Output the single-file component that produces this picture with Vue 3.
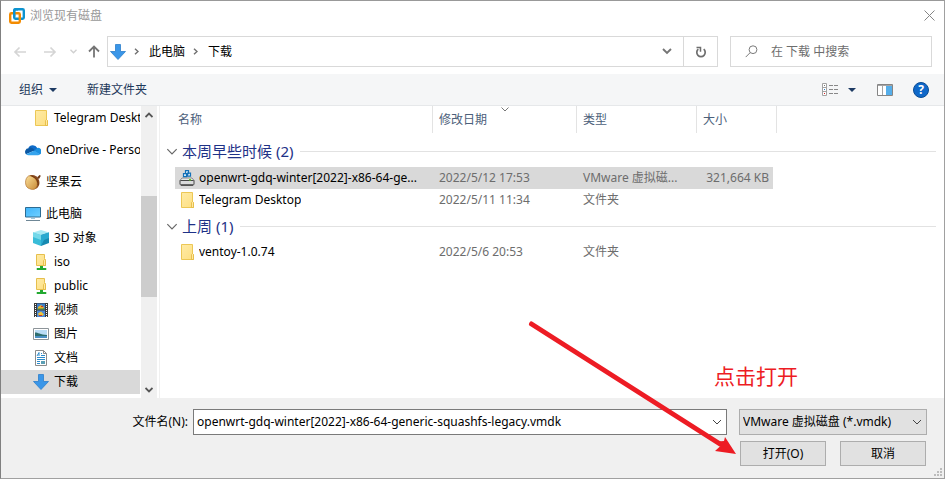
<script setup>
import { ref } from 'vue'

const places = [
  { name: 'Telegram Desktop', icon: 'folder', level: 2 },
  { name: 'OneDrive - Personal', icon: 'cloud', level: 1 },
  { name: '坚果云', icon: 'nut', level: 1 },
  { name: '此电脑', icon: 'pc', level: 1 },
  { name: '3D 对象', icon: 'cube', level: 2 },
  { name: 'iso', icon: 'netfolder', level: 2 },
  { name: 'public', icon: 'netfolder', level: 2 },
  { name: '视频', icon: 'video', level: 2 },
  { name: '图片', icon: 'picture', level: 2 },
  { name: '文档', icon: 'doc', level: 2 },
  { name: '下载', icon: 'download', level: 2 }
]

const groups = [
  {
    title: '本周早些时候 (2)',
    files: [
      { name: 'openwrt-gdq-winter[2022]-x86-64-ge...', date: '2022/5/12 17:53', type: 'VMware 虚拟磁...', size: '321,664 KB', icon: 'disk' },
      { name: 'Telegram Desktop', date: '2022/5/11 11:34', type: '文件夹', size: '', icon: 'folder' }
    ]
  },
  {
    title: '上周 (1)',
    files: [{ name: 'ventoy-1.0.74', date: '2022/5/6 20:53', type: '文件夹', size: '', icon: 'folder' }]
  }
]

const currentPlace = ref('下载')
const fileName = ref('openwrt-gdq-winter[2022]-x86-64-generic-squashfs-legacy.vmdk')
const selected = ref(groups[0].files[0].name)
const fileType = ref('vmdk')
</script>

<template>
  <div class="dialog">
    <svg class="defs" aria-hidden="true">
      <defs>
        <linearGradient id="gBlue" x1="0" y1="0" x2="1" y2="1"><stop offset="0" stop-color="#3fb4fb" /><stop offset="1" stop-color="#6fd0ff" /></linearGradient>
        <linearGradient id="gNut" x1="0" y1="0" x2="1" y2="1"><stop offset="0" stop-color="#fbe09a" /><stop offset="1" stop-color="#c98a35" /></linearGradient>
        <linearGradient id="gFolder" x1="0" y1="0" x2="1" y2="1"><stop offset="0" stop-color="#ffeba6" /><stop offset="1" stop-color="#fddf82" /></linearGradient>
      </defs>
      <symbol id="i-folder" viewBox="0 0 16 16">
        <path d="M2.500.5h11v9l1 1v5h-12z" fill="url(#gFolder)" stroke="#ecc755" />
        <path d="M12.500 15.500v-5l1-1 1 1v5z" fill="#ffe9a2" stroke="#e3b83c" stroke-width=".8" />
      </symbol>
      <symbol id="i-netfolder" viewBox="0 0 16 16">
        <path d="M3.500.5h8v4l1 1v6h-9z" fill="url(#gFolder)" stroke="#e6bf4c" />
        <path d="M10.500 11.500v-5l1-1 1 1v5z" fill="#ffe9a2" stroke="#e3b83c" stroke-width=".8" />
        <path d="M7 12h3v2h3v2H4v-2h3z" fill="#23a931" />
        <path d="M3 14.500h1v1H3zM13 14.500h1v1h-1z" fill="#8bd390" />
      </symbol>
      <symbol id="i-cloud" viewBox="0 0 16 16">
        <path d="M3.200 6.200A5 5 0 0 1 12.300 6 4 4 0 0 1 15 12.500L9 9z" fill="#0f6cc9" />
        <path d="M3.500 6.200A3.600 3.600 0 0 0 1 12.200L9.500 8.600A4 4 0 0 0 3.500 6.200z" fill="#0c59a4" />
        <path d="M9.500 8.600 12.300 6a3.400 3.400 0 0 1 2.900 6z" fill="#1a90e0" />
        <path d="M1 12.200A3.500 3.500 0 0 0 3.500 13.300h9.300a3 3 0 0 0 2.300-1.200L9.500 8.600z" fill="#35a4ee" />
      </symbol>
      <symbol id="i-nut" viewBox="0 0 16 16">
        <path d="M4.500 1.500C8 0 12.500 2 14 6c1.500 4.500-1 8.500-4.500 9.300z" fill="#8a4a1e" />
        <path d="M3.500 2C7 1 12.300 5.500 12.300 10c0 2.500-1.500 4.500-3 5.200-2.500.8-4.500-.4-6.300-1.200C-.2 12-.5 4.500 3.500 2z" fill="url(#gNut)" stroke="#b27430" stroke-width=".7" />
        <path d="M6.500 2.200c4 .8 7 4.500 6.500 9" fill="none" stroke="#71380f" />
        <path d="M12 3.800 14.500 1l1.300.8L14 5z" fill="#6b3512" />
      </symbol>
      <symbol id="i-pc" viewBox="0 0 16 16">
        <path d="M.5 1.500h15v9.500H.5z" fill="url(#gBlue)" stroke="#2d6c93" />
        <path d="M6 12h4v1H6z" fill="#9fc6dc" /><path d="M1 14h14v1H1z" fill="#6f8796" />
      </symbol>
      <symbol id="i-cube" viewBox="0 0 16 16">
        <path d="M8 0l8 2.500L8 5 0 2.500z" fill="#a8e9f3" />
        <path d="M0 2.500 8 5v11l-8-3z" fill="#39bcd8" /><path d="M16 2.500 8 5v11l8-3z" fill="#1689b0" />
        <path d="M8 5l8-2.500V8l-5 2-3 6z" fill="#29a9cf" /><path d="M0 2.500 8 5v5L0 7z" fill="#74d8e9" />
      </symbol>
      <symbol id="i-video" viewBox="0 0 16 16">
        <path d="M1 1h14v14H1z" fill="#3b3b3b" /><path d="M4 1.500h8v6H4z" fill="#3d7fc9" /><path d="M4 8.500h8V15H4z" fill="#4c8bd8" />
        <path d="M5 5l3-2 3 2-1 2H5z" fill="#e9b52c" /><path d="M4 6.500h8v1H4z" fill="#57912f" /><path d="M5 11.500l3-2 3 3-2 1.500H6z" fill="#efc53a" /><path d="M8 4h2v1H8zM6 13h3v1H6z" fill="#c9352b" />
        <path d="M2 2h1v1H2zM2 4h1v1H2zM2 6h1v1H2zM2 8h1v1H2zM2 10h1v1H2zM2 12h1v1H2zM2 14h1v1H2zM13 2h1v1h-1zM13 4h1v1h-1zM13 6h1v1h-1zM13 8h1v1h-1zM13 10h1v1h-1zM13 12h1v1h-1zM13 14h1v1h-1z" fill="#fff" />
      </symbol>
      <symbol id="i-picture" viewBox="0 0 16 16">
        <path d="M.5 2.500h15v11H.5z" fill="#fff" stroke="#8d9499" /><path d="M2 4h12v8H2z" fill="#b9dcf6" />
        <path d="M2 6.500c3 0 5 2 12 2.500v1H2z" fill="#2c6d6f" /><path d="M2 10h12v2H2z" fill="#4a8fc4" />
      </symbol>
      <symbol id="i-doc" viewBox="0 0 16 16">
        <path d="M2.500.5h8l3 3v12h-11z" fill="#fff" stroke="#8b8b8b" /><path d="M10.500.5v3h3" fill="none" stroke="#8b8b8b" />
        <path d="M4 6l2-3.500V6M8 3.500h1M8 5.500h4M4 7.500h8M4 9.500h8M4 11.500h3M4 13.500h3" fill="none" stroke="#2b8acb" /><path d="M8 11h4v3H8z" fill="#5c9fb5" />
      </symbol>
      <symbol id="i-download" viewBox="0 0 16 16">
        <path d="M5.500.5h5v7h5L8 15.500.5 7.500h5z" fill="#3a96e8" stroke="#2b7fcb" stroke-width=".8" />
      </symbol>
      <symbol id="i-disk" viewBox="0 0 16 16">
        <path d="M3 8h10l2.500 3H.5z" fill="#e6e6e6" stroke="#777" stroke-width=".8" /><rect x="1" y="10.500" width="14" height="4.500" rx="1" fill="#d9dadb" stroke="#484848" /><path d="M2 14.500h12v1.200H2z" fill="#3b3b3b" />
        <path d="M10 9h2v1.500h-2z" fill="#5ed321" />
        <path d="M6.500.7h3v3h-3zM4.500 3.700h3v3h-3zM8.500 3.200h3v3h-3z" fill="#e4f3fc" stroke="#1270b8" stroke-width="1.200" />
      </symbol>
      <symbol id="i-chevron" viewBox="0 0 10 6"><path d="M1 1l4 4 4-4" fill="none" stroke="currentColor" /></symbol>
    </svg>

    <header class="titlebar">
      <svg class="app-icon" viewBox="0 0 16 16" aria-hidden="true">
        <rect x="5.200" y="1.200" width="9.600" height="9.600" rx="1.200" fill="none" stroke="#0d93cf" stroke-width="2.400" />
        <rect x="1.200" y="5.200" width="9.600" height="9.600" rx="1.200" fill="none" stroke="#f38b00" stroke-width="2.400" />
        <path d="M5.200 8.500V2.400L6.400 1.200h2.600" fill="none" stroke="#0d93cf" stroke-width="2.400" />
      </svg>
      <h1>浏览现有磁盘</h1>
      <button class="plain close" aria-label="关闭"><svg width="11" height="11" viewBox="0 0 11 11"><path d="M.5.5l10 10M10.500.5l-10 10" stroke="#858585" /></svg></button>
    </header>

    <nav class="navbar">
      <div class="history">
        <button class="plain" aria-label="后退"><svg width="14" height="12" viewBox="0 0 14 12"><path d="M13 6H2M6.500 1.500 2 6l4.500 4.500" fill="none" stroke="#d5d5d5" stroke-width="1.700" /></svg></button>
        <button class="plain" aria-label="前进"><svg width="14" height="12" viewBox="0 0 14 12"><path d="M1 6h11M7.500 1.500 12 6l-4.500 4.500" fill="none" stroke="#d5d5d5" stroke-width="1.700" /></svg></button>
        <button class="plain recent" aria-label="最近位置"><svg width="7" height="5" viewBox="0 0 7 5"><path d="M.5.7l3 3 3-3" fill="none" stroke="#d0d0d0" stroke-width="1.400" /></svg></button>
        <button class="plain" aria-label="上移"><svg width="12" height="13" viewBox="0 0 12 13"><path d="M6 12.500V2M1 6.500l5-5 5 5" fill="none" stroke="#757575" stroke-width="1.800" /></svg></button>
      </div>
      <div class="address">
        <div class="crumbs">
          <svg width="16" height="16"><use href="#i-download" /></svg>
          <svg class="sep" width="5" height="7" viewBox="0 0 5 7"><path d="M1 .7l3 2.800-3 2.800" fill="none" stroke="#707070" stroke-width="1.400" /></svg>
          <a href="#">此电脑</a>
          <svg class="sep" width="5" height="7" viewBox="0 0 5 7"><path d="M1 .7l3 2.800-3 2.800" fill="none" stroke="#707070" stroke-width="1.400" /></svg>
          <a href="#">下载</a>
        </div>
        <button class="plain drop" aria-label="以前的位置"><svg width="10" height="7" viewBox="0 0 10 7"><path d="M1 1l4 4 4-4" fill="none" stroke="#757575" stroke-width="1.900" /></svg></button>
        <button class="plain refresh" aria-label="刷新"><svg width="12" height="12" viewBox="0 0 12 12"><path d="M8.700 3.200a4.200 4.200 0 1 1-5.400 0" fill="none" stroke="#6e6e6e" stroke-width="1.700" /><path d="M1.500 1.500h4v4.300" fill="none" stroke="#6e6e6e" stroke-width="1.500" /></svg></button>
      </div>
      <label class="search">
        <svg width="13" height="13" viewBox="0 0 13 13"><circle cx="8" cy="4.700" r="3.900" fill="none" stroke="#7b7b7b" /><path d="M5.200 7.600.7 12.100" stroke="#7b7b7b" /></svg>
        <input type="search" placeholder="在 下载 中搜索" aria-label="搜索" />
      </label>
    </nav>

    <div class="toolbar">
      <button class="plain organize">组织 <svg width="8" height="4" viewBox="0 0 8 4"><path d="M0 0h8L4 4z" fill="#1d3a63" /></svg></button>
      <button class="plain">新建文件夹</button>
      <span class="spacer"></span>
      <button class="plain view" aria-label="更改视图">
        <svg width="17" height="13" viewBox="0 0 17 13"><path d="M.5.5h4v12h-4zM.5 4.500h4M.5 8.500h4" fill="#fff" stroke="#a2a2a2" /><path d="M7 2.500h4M12 2.500h4M7 6.500h4M12 6.500h4M7 10.500h4M12 10.500h4" stroke="#888" /><path d="M2 2h1v1H2z" fill="#777" /><path d="M2 6h1v1H2z" fill="#2b7fcb" /><path d="M2 10h1v1H2z" fill="#d22" /></svg>
        <svg width="8" height="4" viewBox="0 0 8 4"><path d="M0 0h8L4 4z" fill="#1d3a63" /></svg>
      </button>
      <button class="plain preview" aria-label="预览窗格"><svg width="16" height="12" viewBox="0 0 16 12"><path d="M.5.5h15v11H.5z" fill="#fff" stroke="#858585" /><path d="M1 1.500h14M5.500 2v9" stroke="#a5a5a5" /><path d="M9 2h6v9H9z" fill="#55aeea" /></svg></button>
      <button class="help" aria-label="帮助">?</button>
    </div>

    <main class="body">
      <aside class="sidebar">
        <ul>
          <li v-for="p in places" :key="p.name" :class="['level-' + p.level, { current: p.name === currentPlace }]">
            <a href="#" @click.prevent="currentPlace = p.name"><svg width="16" height="16"><use :href="'#i-' + p.icon" /></svg><span>{{ p.name }}</span></a>
          </li>
        </ul>
        <div class="scrollbar" aria-hidden="true">
          <svg width="8" height="6" viewBox="0 0 8 6"><path d="M.5 5 4 1.500 7.500 5" fill="none" stroke="#555" stroke-width="1.800" /></svg>
          <div class="track"><div class="thumb"></div></div>
          <svg width="8" height="6" viewBox="0 0 8 6"><path d="M.5 1 4 4.500 7.500 1" fill="none" stroke="#555" stroke-width="1.800" /></svg>
        </div>
      </aside>

      <section class="files">
        <table>
          <colgroup><col class="c-edge" /><col class="c-name" /><col class="c-date" /><col class="c-type" /><col class="c-size" /><col class="c-gap" /><col /></colgroup>
          <thead>
            <tr>
              <td></td><th class="first">名称</th>
              <th>修改日期<svg class="sort" width="8" height="5" viewBox="0 0 8 5"><path d="M.5.5 4 4 7.500.5" fill="none" stroke="#777" /></svg></th>
              <th>类型</th><th colspan="2">大小</th><td></td>
            </tr>
          </thead>
          <tbody v-for="g in groups" :key="g.title">
            <tr class="group">
              <th colspan="7"><div><svg width="12" height="7"><use href="#i-chevron" /></svg><span>{{ g.title }}</span></div></th>
            </tr>
            <tr v-for="f in g.files" :key="f.name" :class="{ selected: f.name === selected }" @click="selected = f.name">
              <td></td>
              <td><div class="file"><svg width="16" height="16"><use :href="'#i-' + f.icon" /></svg><span>{{ f.name }}</span></div></td>
              <td class="meta">{{ f.date }}</td>
              <td class="meta">{{ f.type }}</td>
              <td class="meta size">{{ f.size }}</td>
              <td></td><td></td>
            </tr>
          </tbody>
        </table>
      </section>
    </main>

    <footer class="footer">
      <label for="fname">文件名(N):</label>
      <div class="combo">
        <input id="fname" v-model="fileName" type="text" />
        <svg width="10" height="6"><use href="#i-chevron" /></svg>
      </div>
      <div class="picker">
        <select v-model="fileType" aria-label="文件类型"><option value="vmdk">VMware 虚拟磁盘 (*.vmdk)</option></select>
        <svg width="10" height="6"><use href="#i-chevron" /></svg>
      </div>
      <div class="actions"><button>打开(O)</button><button>取消</button></div>
      <svg class="grip" width="9" height="9" viewBox="0 0 9 9"><path d="M6 0h2v2H6zM3 3h2v2H3zM6 3h2v2H6zM0 6h2v2H0zM3 6h2v2H3zM6 6h2v2H6z" fill="#bcbcbc" /></svg>
    </footer>

    <div class="note">
      <span>点击打开</span>
      <svg width="208" height="138" viewBox="0 0 208 138"><path d="M3.500 4 192 124" stroke="#ed1c24" stroke-width="5" stroke-linecap="round" /><path d="M208 134 187 131 193 125.500 190 121.500 196 121 197 117z" fill="#ed1c24" /></svg>
    </div>
  </div>
</template>

<style>
body { margin: 0; }
</style>

<style scoped>
.dialog {
  position: relative;
  display: flex;
  flex-direction: column;
  box-sizing: border-box;
  min-height: 100vh;
  border: 1px solid #a0a0a0;
  border-top-color: #999;
  border-left-color: #808080;
  background: #fff;
  color: #000;
  font: 12px/16px "Noto Sans", "Noto Sans CJK SC", sans-serif;
}
.defs { position: absolute; width: 0; height: 0; }
svg { flex: none; display: block; }
a { color: inherit; text-decoration: none; }
button, input, select { font: inherit; color: inherit; margin: 0; }
.plain { display: flex; align-items: center; justify-content: center; padding: 0; border: 0; background: none; }

.titlebar { display: flex; align-items: center; height: 29px; padding: 0 9px 0 8px; gap: 5px; }
.app-icon { width: 16px; height: 16px; }
.titlebar h1 { flex: 1; margin: 0; font-size: 12px; font-weight: 400; color: #999; }

.navbar { display: flex; padding: 6px 12px 7px 12px; height: 31px; }
.history { display: flex; align-items: center; gap: 16px; width: 94px; }
.history .recent { margin: 0 -5px 0 -3px; }
.address { display: flex; flex: 1; min-width: 0; box-sizing: border-box; border: 1px solid #d9d9d9; }
.crumbs { display: flex; align-items: center; flex: 1; padding-left: 2px; }
.crumbs .sep { margin: 0 10px 0 8px; }
.drop { width: 32px; }
.refresh { width: 34px; border-left: 1px solid #d9d9d9; }
.search { display: flex; align-items: center; gap: 13px; box-sizing: border-box; width: 202px; margin-left: 12px; padding: 0 14px; border: 1px solid #d9d9d9; }
.search input { flex: 1; min-width: 0; padding: 0; border: 0; outline: 0; background: none; }
.search input::placeholder { color: #6d6d6d; opacity: 1; }

.toolbar { display: flex; align-items: center; height: 31px; padding: 0 15px 0 18px; border-bottom: 1px solid #e6e8ea; background: #f5f6f7; color: #1e395b; }
.organize { gap: 6px; margin-right: 30px; }
.spacer { flex: 1; }
.view { gap: 9px; margin-right: 21px; }
.preview { margin-right: 20px; }
.help { width: 16px; height: 16px; padding: 0; border: 1px solid #0a4c94; border-radius: 50%; background: #0f68c9; color: #fff; font-weight: 700; line-height: 14px; text-align: center; }

.body { display: flex; flex: 1; }
.sidebar { display: flex; width: 158px; border-right: 1px solid #f0f0f0; flex: none; }
.sidebar ul { flex: 1; min-width: 0; margin: 0; padding: 0 0 4px; list-style: none; overflow: hidden; }
.sidebar li { height: 24px; overflow: hidden; }
.sidebar .level-1 { margin-top: 8px; }
.sidebar a { display: flex; align-items: center; gap: 5px; height: 24px; white-space: nowrap; }
.level-1 a { padding-left: 24px; }
.level-2 a { padding-left: 32px; }
.current { background: #d9d9d9; }
.scrollbar { display: flex; flex-direction: column; align-items: center; width: 16px; margin: 0 2px 0 1px; padding: 6px 0 5px; box-sizing: border-box; background: #f0f0f0; }
.track { flex: 1; align-self: stretch; display: flex; flex-direction: column; padding: 78px 0 0; }
.thumb { height: 101px; background: #cdcdcd; }

.files { flex: 1; min-width: 0; padding-right: 8px; }
table { width: 100%; table-layout: fixed; border-collapse: separate; border-spacing: 0; }
.c-edge { width: 15px; }
.c-name { width: 258px; }
.c-date { width: 144px; }
.c-type { width: 120px; }
.c-size { width: 76px; }
.c-gap { width: 4px; }
th, td { padding: 0; text-align: left; font-weight: 400; }
thead th { position: relative; height: 27px; padding-left: 6px; border-right: 1px solid #e3e3e3; color: #4c607a; }
thead th.first { padding-left: 3px; }
.sort { position: absolute; top: 1px; left: 50%; margin-left: -4px; }
.group th { height: 30px; color: #1e3287; font-size: 15px; line-height: 20px; }
thead + tbody .group th { height: 32px; padding-top: 2px; }
.group div { display: flex; align-items: center; gap: 4px; padding-left: 6px; }
.group svg { color: #666; }
.group div::after { content: ""; flex: 1; height: 1px; margin-left: 3px; background: #e2e2e2; }
tbody td { height: 22px; }
.file { display: flex; align-items: center; gap: 4px; padding: 0 7px 0 4px; }
.file span { overflow: hidden; text-overflow: ellipsis; white-space: nowrap; }
.meta { padding: 0 12px 0 6px; color: #6d6d6d; overflow: hidden; text-overflow: ellipsis; white-space: nowrap; }
.size { padding: 0 4px 0 0; text-align: right; }
.selected td:nth-child(n + 2):nth-child(-n + 5) { background: #d9d9d9; }

.footer { position: relative; display: grid; grid-template-columns: 187px minmax(0, 1fr) 188px; grid-template-rows: 26px 25px; gap: 6px 0; padding: 11px 17px 12px 0; background: #f0f0f0; }
.footer label { align-self: center; text-align: right; }
.combo { display: flex; align-items: center; margin: 0 12px 0 5px; padding: 0 4px 0 3px; border: 1px solid #7a7a7a; background: #fff; color: #444; }
.combo input { flex: 1; min-width: 0; padding: 0; border: 0; outline: 0; background: none; color: #000; }
.picker { display: flex; align-items: center; border: 1px solid #adadad; background: #e1e1e1; padding: 0 4px 0 3px; color: #444; }
.picker select { flex: 1; min-width: 0; padding: 0; border: 0; outline: 0; background: none; appearance: none; color: #000; }
.actions { grid-column: 3; display: grid; grid-template-columns: 1fr 1fr; gap: 14px; padding: 0 1px; }
.actions button { padding: 0; border: 1px solid #adadad; background: #e1e1e1; }
.grip { position: absolute; right: 1px; bottom: 1px; }

.note { position: absolute; right: 208px; bottom: 20px; pointer-events: none; color: #ed1c24; }
.note span { position: absolute; right: -62px; top: 43px; font-size: 21px; line-height: 26px; white-space: nowrap; }
</style>
